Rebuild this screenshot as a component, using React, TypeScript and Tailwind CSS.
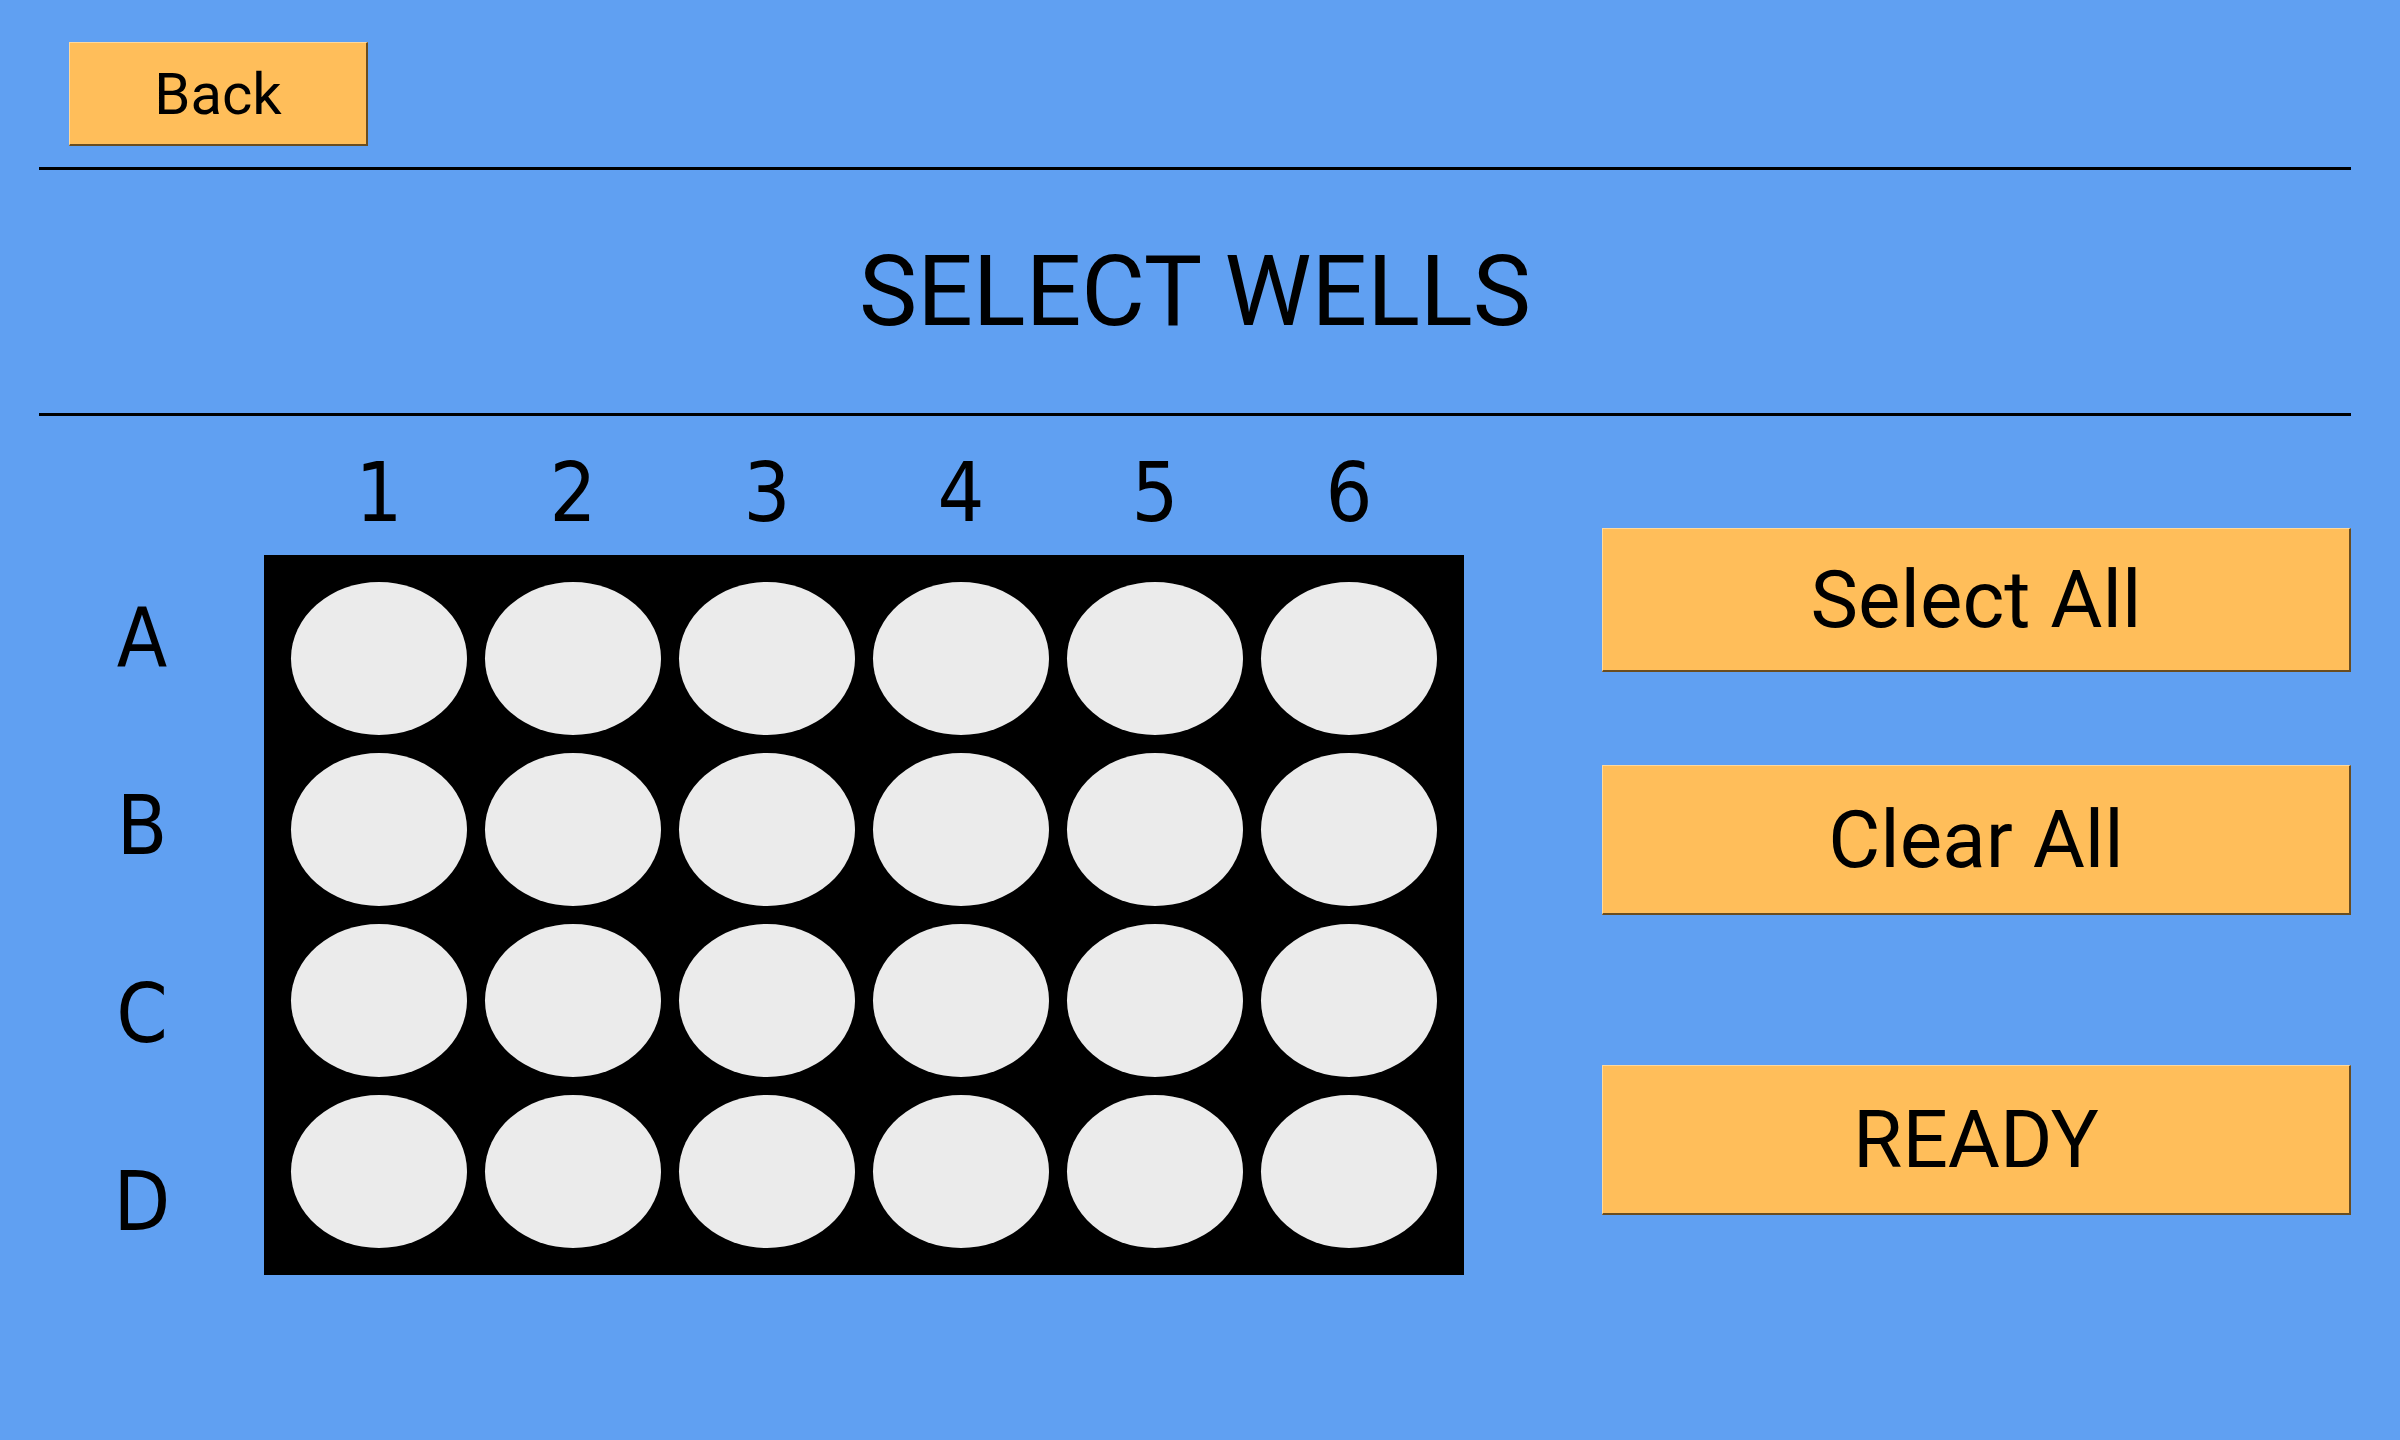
import React from "react";

const cols = ["1", "2", "3", "4", "5", "6"];
const rows = ["A", "B", "C", "D"];

function OrangeButton({
  label,
  className,
  textClass,
}: {
  label: string;
  className: string;
  textClass: string;
}) {
  return (
    <button
      className={`flex items-center justify-center bg-[#ffbe5a] border-t border-l border-t-[#ffd99c] border-l-[#ffd99c] border-b-2 border-r-2 border-b-[#6a4d20] border-r-[#6a4d20] text-black font-['Roboto',sans-serif] leading-none ${className}`}
    >
      <span className={textClass}>{label}</span>
    </button>
  );
}

export default function App() {
  return (
    <div className="w-[2400px] h-[1440px] bg-[#60a0f2] pl-[39px] pr-[49px] overflow-hidden">
      {/* header */}
      <div className="h-[167px] pt-[42px] pl-[30px]">
        <OrangeButton
          label="Back"
          className="w-[299px] h-[104px]"
          textClass="text-[58px]"
        />
      </div>
      <div className="h-[3px] bg-black" />
      <div className="h-[243px] flex items-center justify-center">
        <h1 className="text-[98px] font-['Roboto',sans-serif] text-black leading-none font-normal">
          SELECT WELLS
        </h1>
      </div>
      <div className="h-[3px] bg-black" />

      {/* body */}
      <div className="flex">
        {/* left: plate */}
        <div className="flex flex-col">
          <div className="h-[128px] pt-[26px] pl-[252px] flex items-center">
            <div className="grid grid-cols-6 gap-[18px] w-[1146px]">
              {cols.map((c) => (
                <div
                  key={c}
                  className="text-center text-[82px] leading-none font-['DejaVu_Sans_Condensed','DejaVu_Sans',sans-serif] font-stretch-condensed text-black"
                >
                  {c}
                </div>
              ))}
            </div>
          </div>
          <div className="flex items-start">
            <div className="w-[206px] h-[752px] flex flex-col">
              {rows.map((r) => (
                <div
                  key={r}
                  className="h-[188px] flex items-center justify-center text-[82px] leading-none font-['DejaVu_Sans_Condensed','DejaVu_Sans',sans-serif] font-stretch-condensed text-black"
                >
                  {r}
                </div>
              ))}
            </div>
            <div className="ml-[19px] mt-[11px] w-[1200px] h-[720px] bg-black p-[27px] grid grid-cols-6 grid-rows-4 gap-[18px]">
              {rows.map((r) =>
                cols.map((c) => (
                  <div
                    key={r + c}
                    className="rounded-[50%] bg-[#ebebeb] w-full h-full"
                  />
                ))
              )}
            </div>
          </div>
        </div>

        {/* right: buttons */}
        <div className="ml-auto w-[749px] flex flex-col">
          <OrangeButton
            label="Select All"
            className="mt-[112px] h-[144px] w-full"
            textClass="text-[80px]"
          />
          <OrangeButton
            label="Clear All"
            className="mt-[93px] h-[150px] w-full"
            textClass="text-[80px]"
          />
          <OrangeButton
            label="READY"
            className="mt-[150px] h-[150px] w-full"
            textClass="text-[80px]"
          />
        </div>
      </div>
    </div>
  );
}
